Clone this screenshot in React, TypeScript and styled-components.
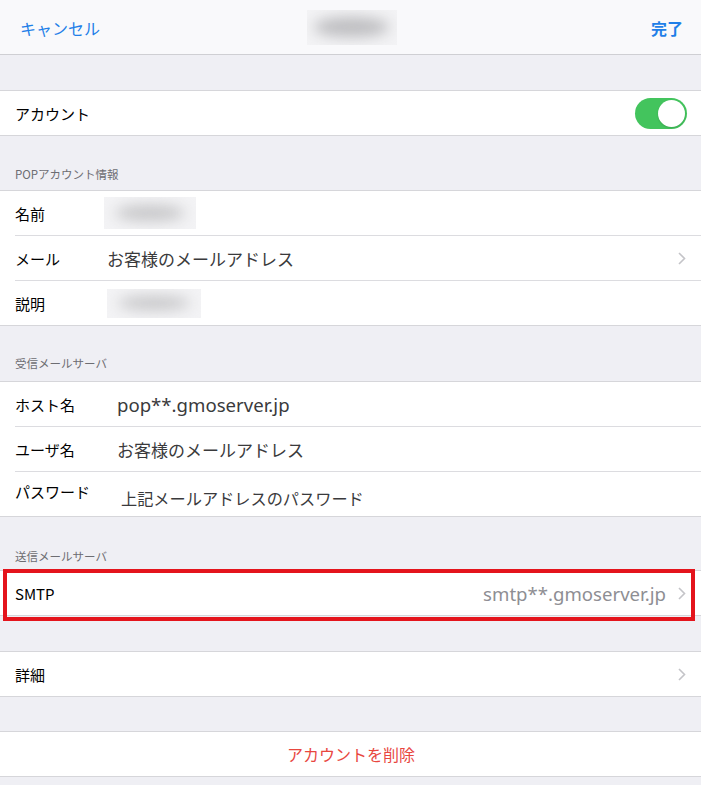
import React from "react";
import styled, { createGlobalStyle, css } from "styled-components";

const Color = {
  Background: "#efeff4",
  NavBackground: "#f9f9fb",
  Border: "#d6d6da",
  Separator: "#dcdce0",
  Text: "#000000",
  Value: "#3a3a3c",
  Secondary: "#8e8e93",
  Header: "#6d6d72",
  Chevron: "#c4c4c8",
  Blue: "#1f7fe8",
  Red: "#e8473f",
  Green: "#43c45d",
  Highlight: "#e4141c",
};

const GlobalStyle = createGlobalStyle`
  html, body {
    margin: 0;
    padding: 0;
    background: ${Color.Background};
    font-family: "Noto Sans", "Noto Sans CJK JP", sans-serif;
    -webkit-font-smoothing: antialiased;
  }
`;

const Chevron: React.FC = () => (
  <ChevronIcon viewBox="0 0 8 13" width="8" height="13">
    <polyline points="1,1 6.5,6.5 1,12" fill="none" stroke={Color.Chevron} strokeWidth="1.6" />
  </ChevronIcon>
);

export default function App() {
  return (
    <>
      <GlobalStyle />
      <Page>
        <NavBar>
          <NavButton>キャンセル</NavButton>
          <Blur $w={90} $h={35} $dark />
          <NavButton $bold $right>完了</NavButton>
        </NavBar>

        <Spacer $h={35} />
        <Group>
          <Row>
            <Label>アカウント</Label>
            <Toggle>
              <Knob />
            </Toggle>
          </Row>
        </Group>

        <SectionHeader $h={54}>POPアカウント情報</SectionHeader>
        <Group>
          <Row>
            <Label $width={89}>名前</Label>
            <Blur $w={92} $h={32} />
          </Row>
          <Row>
            <Label $width={92}>メール</Label>
            <Value>お客様のメールアドレス</Value>
            <Chevron />
          </Row>
          <Row>
            <Label $width={92}>説明</Label>
            <Blur $w={94} $h={29} />
          </Row>
        </Group>

        <SectionHeader $h={55} $pad={10}>受信メールサーバ</SectionHeader>
        <Group>
          <Row>
            <Label $width={102}>ホスト名</Label>
            <Value $size={18.6}>pop**.gmoserver.jp</Value>
          </Row>
          <Row>
            <Label $width={102}>ユーザ名</Label>
            <Value>お客様のメールアドレス</Value>
          </Row>
          <Row>
            <Label $width={106} $shift={-3}>パスワード</Label>
            <Value $size={16.2} $shift={4}>上記メールアドレスのパスワード</Value>
          </Row>
        </Group>

        <SectionHeader $h={53} $pad={6}>送信メールサーバ</SectionHeader>
        <Group>
          <Row $highlighted>
            <Label>SMTP</Label>
            <Value $secondary $size={18.6}>smtp**.gmoserver.jp</Value>
            <Chevron />
          </Row>
        </Group>

        <Spacer $h={35} />
        <Group>
          <Row>
            <Label>詳細</Label>
            <Fill />
            <Chevron />
          </Row>
        </Group>

        <Spacer $h={34} />
        <Group>
          <Row $center>
            <DeleteText>アカウントを削除</DeleteText>
          </Row>
        </Group>
        <Spacer $h={10} />
      </Page>
    </>
  );
}

const Page = styled.div`
  width: 701px;
  min-height: 785px;
  background: ${Color.Background};
  display: flex;
  flex-direction: column;
`;

const NavBar = styled.header`
  height: 54px;
  padding: 0 18px 0 20px;
  display: grid;
  grid-template-columns: 1fr auto 1fr;
  align-items: center;
  background: ${Color.NavBackground};
  border-bottom: 1px solid #cfcfd3;
`;

const NavButton = styled.span<{ $bold?: boolean; $right?: boolean }>`
  font-family: "Noto Sans CJK JP", sans-serif;
  font-size: 16px;
  color: ${Color.Blue};
  font-weight: ${(p) => (p.$bold ? 600 : 400)};
  text-align: ${(p) => (p.$right ? "right" : "left")};
  padding-top: 1px;
`;

const Blur = styled.div<{ $w: number; $h: number; $dark?: boolean }>`
  position: relative;
  width: ${(p) => p.$w}px;
  height: ${(p) => p.$h}px;
  background: #f3f3f5;
  overflow: hidden;
  flex-shrink: 0;

  &::before {
    content: "";
    position: absolute;
    inset: ${(p) => (p.$dark ? "22% 8%" : "25% 12%")};
    border-radius: 50%;
    background: ${(p) => (p.$dark ? "#bdbdc0" : "#c6c6c8")};
    filter: blur(7px);
  }
`;

const Spacer = styled.div<{ $h: number }>`
  height: ${(p) => p.$h}px;
  flex-shrink: 0;
`;

const SectionHeader = styled.div<{ $h: number; $pad?: number }>`
  height: ${(p) => p.$h}px;
  box-sizing: border-box;
  padding: 0 15px ${(p) => p.$pad ?? 8}px;
  display: flex;
  align-items: flex-end;
  font-family: "Noto Sans CJK JP", sans-serif;
  font-size: 11.5px;
  line-height: 16px;
  color: ${Color.Header};
`;

const Group = styled.section`
  background: #ffffff;
  border-top: 1px solid ${Color.Border};
  border-bottom: 1px solid ${Color.Border};
`;

const Row = styled.div<{ $highlighted?: boolean; $center?: boolean }>`
  position: relative;
  height: 44px;
  padding: 0 14px 0 15px;
  display: flex;
  align-items: center;
  justify-content: ${(p) => (p.$center ? "center" : "flex-start")};

  &:not(:last-child) {
    height: 45px;
    box-sizing: border-box;
    border-bottom: 1px solid ${Color.Separator};
  }

  &:not(:last-child)::before {
    content: "";
    position: absolute;
    left: 0;
    bottom: -1px;
    width: 15px;
    height: 1px;
    background: #ffffff;
  }

  ${(p) =>
    p.$highlighted &&
    css`
      &::after {
        content: "";
        position: absolute;
        top: -2px;
        bottom: -6px;
        left: 3px;
        right: 6px;
        border: 4px solid ${Color.Highlight};
        pointer-events: none;
      }
    `}
`;

const Label = styled.span<{ $width?: number; $shift?: number }>`
  font-family: "Noto Sans CJK JP", sans-serif;
  font-size: 15px;
  color: ${Color.Text};
  flex-shrink: 0;
  width: ${(p) => (p.$width ? `${p.$width}px` : "auto")};
  transform: translateY(${(p) => p.$shift ?? 0}px);
`;

const Value = styled.span<{ $secondary?: boolean; $size?: number; $shift?: number }>`
  flex: 1;
  font-family: "Noto Sans", "Noto Sans CJK JP", sans-serif;
  font-size: ${(p) => p.$size ?? 17}px;
  color: ${(p) => (p.$secondary ? Color.Secondary : Color.Value)};
  text-align: ${(p) => (p.$secondary ? "right" : "left")};
  padding-right: ${(p) => (p.$secondary ? 12 : 0)}px;
  white-space: nowrap;
  transform: translateY(${(p) => p.$shift ?? 0}px);
`;

const Fill = styled.div`
  flex: 1;
`;

const ChevronIcon = styled.svg`
  flex-shrink: 0;
  margin-right: 1px;
`;

const Toggle = styled.div`
  margin-left: auto;
  width: 52px;
  height: 31px;
  box-sizing: border-box;
  border-radius: 16px;
  background: ${Color.Green};
  padding: 2px;
  display: flex;
  justify-content: flex-end;
  align-items: center;
`;

const Knob = styled.div`
  width: 27px;
  height: 27px;
  border-radius: 50%;
  background: #ffffff;
  box-shadow: 0 1px 2px rgba(0, 0, 0, 0.15);
`;

const DeleteText = styled.span`
  font-family: "Noto Sans CJK JP", sans-serif;
  font-size: 16px;
  color: ${Color.Red};
`;
